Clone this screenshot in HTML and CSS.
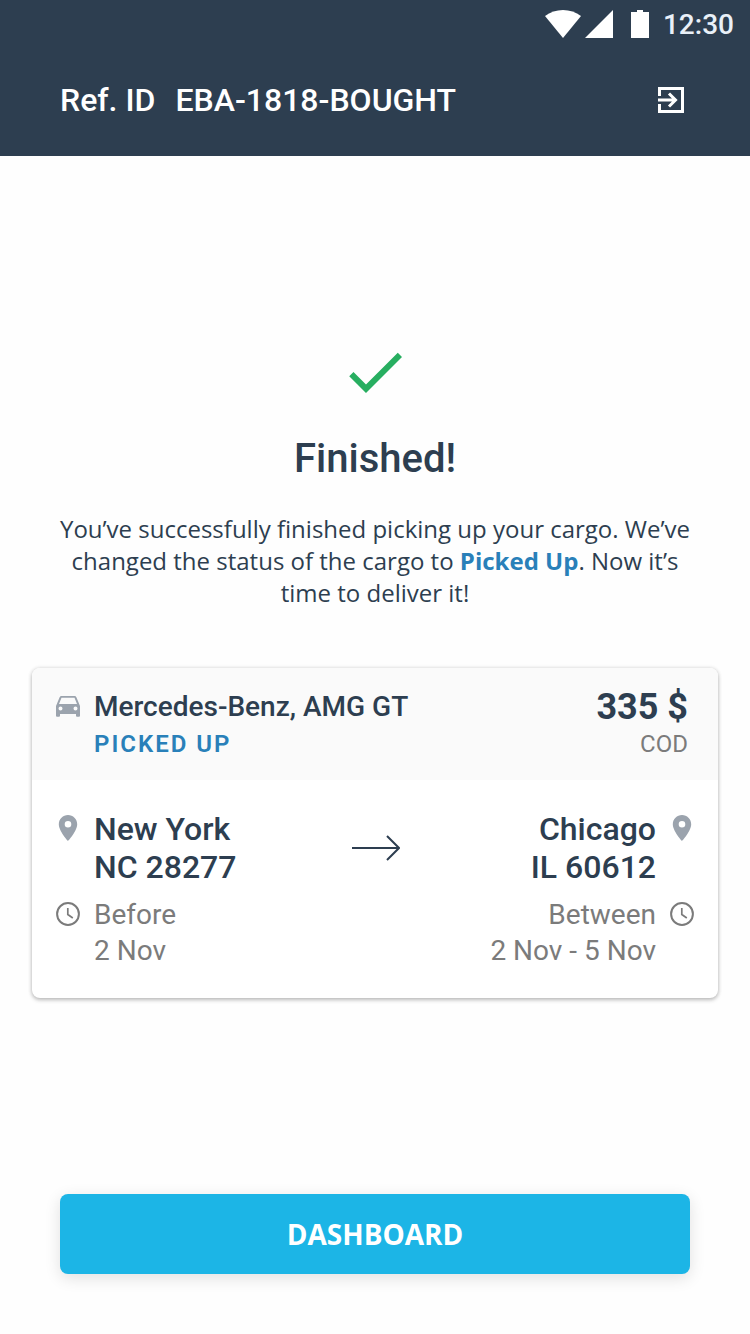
FILE: index.html
```html
<!DOCTYPE html>
<html lang="en">
<head>
    <meta charset="UTF-8">
    <meta name="viewport" content="width=device-width, initial-scale=1.0">
    <title>Cargo picked up</title>
    <link rel="stylesheet" href="styles.css">
</head>
<body>
    <header class="header">
        <div class="status-bar">
            <svg class="wifi-icon" width="36" height="28" viewBox="0 0 36 28" aria-hidden="true">
                <path d="M0 6C10-2 26-2 36 6L18 28z"/>
            </svg>
            <svg class="signal-icon" width="28" height="28" viewBox="0 0 28 28" aria-hidden="true">
                <path d="M28 0v28H0z"/>
            </svg>
            <svg class="battery-icon" width="18" height="28" viewBox="0 0 18 28" aria-hidden="true">
                <path d="M6 0h6v2h6v26H0V2h6z"/>
            </svg>
            <span class="time">12:30</span>
        </div>
        <div class="title-bar">
            <h1 class="ref-id"><span>Ref. ID</span><span>EBA-1818-BOUGHT</span></h1>
            <button class="exit-btn" type="button" aria-label="Exit">
                <svg width="26" height="26" viewBox="0 0 26 26" fill="none" stroke="currentColor" stroke-width="3">
                    <path d="M1.5 9V1.5h23v23h-23V17"/>
                    <path d="M0 13h17M11 6.5l6.500 6.500-6.500 6.500"/>
                </svg>
            </button>
        </div>
    </header>

    <main class="content">
        <svg class="check-icon" width="72" height="72" viewBox="0 0 24 24" aria-hidden="true">
            <path d="M9 16.17L4.83 12l-1.42 1.41L9 19 21 7l-1.41-1.41z"/>
        </svg>
        <h2 class="headline">Finished!</h2>
        <p class="message">You’ve successfully finished picking up your cargo. We’ve changed the status of the cargo to <strong>Picked Up</strong>. Now it’s time to deliver it!</p>

        <section class="card">
            <div class="card-header">
                <div class="icon-row">
                    <svg class="icon" width="24" height="36" viewBox="0 1 24 36" aria-hidden="true">
                        <path fill-rule="evenodd" d="M20.5 9.5C20.2 8.6 19.5 8 18.5 8h-13c-1 0-1.7.6-2 1.5L0 18v9.500c0 .8.5 1.300 1.300 1.300h1.400c.8 0 1.300-.5 1.300-1.300V26h16v1.500c0 .8.5 1.300 1.300 1.300h1.400c.8 0 1.300-.5 1.300-1.300V18zM5.500 9.700h13l2.500 6.300H3zM4.500 22.500a2 2 0 1 1 0-4 2 2 0 0 1 0 4zM19.500 22.500a2 2 0 1 1 0-4 2 2 0 0 1 0 4z"/>
                    </svg>
                    <div>
                        <h3 class="car-name">Mercedes-Benz, AMG GT</h3>
                        <div class="status">PICKED UP</div>
                    </div>
                </div>
                <div class="payment">
                    <div class="price">335 $</div>
                    <div class="method">COD</div>
                </div>
            </div>

            <div class="route">
                <div class="icon-row">
                    <svg class="icon" width="24" height="36" viewBox="0 0 24 36" aria-hidden="true">
                        <path fill-rule="evenodd" d="M12 5c-5 0-9.200 4-9.200 9.200C2.800 21 12 31 12 31s9.200-10 9.200-16.800C21.200 9 17 5 12 5zm0 12.500a3.300 3.300 0 1 1 0-6.600 3.300 3.300 0 0 1 0 6.600z"/>
                    </svg>
                    <div class="place">New York<br>NC 28277</div>
                </div>
                <svg class="arrow" width="50" height="26" viewBox="0 0 50 26" fill="none" stroke="currentColor" stroke-width="2" aria-hidden="true">
                    <path d="M2 13h47M37 1l12 12-12 12"/>
                </svg>
                <div class="icon-row icon-row-end">
                    <svg class="icon" width="24" height="36" viewBox="0 0 24 36" aria-hidden="true">
                        <path fill-rule="evenodd" d="M12 5c-5 0-9.200 4-9.200 9.200C2.800 21 12 31 12 31s9.200-10 9.200-16.800C21.200 9 17 5 12 5zm0 12.500a3.300 3.300 0 1 1 0-6.600 3.300 3.300 0 0 1 0 6.600z"/>
                    </svg>
                    <div class="place">Chicago<br>IL 60612</div>
                </div>

                <div class="icon-row">
                    <svg class="clock-icon" width="24" height="36" viewBox="0 1 24 36" fill="none" stroke="currentColor" stroke-width="2" aria-hidden="true">
                        <circle cx="12" cy="18" r="10.900"/>
                        <path d="M11.800 12v6.500l5 3.500" stroke-width="1.700"/>
                    </svg>
                    <div class="date">Before<br>2 Nov</div>
                </div>
                <div class="icon-row icon-row-end date-end">
                    <svg class="clock-icon" width="24" height="36" viewBox="0 1 24 36" fill="none" stroke="currentColor" stroke-width="2" aria-hidden="true">
                        <circle cx="12" cy="18" r="10.900"/>
                        <path d="M11.800 12v6.500l5 3.500" stroke-width="1.700"/>
                    </svg>
                    <div class="date">Between<br>2 Nov - 5 Nov</div>
                </div>
            </div>
        </section>
    </main>

    <footer class="footer">
        <button class="dashboard-btn" type="button">DASHBOARD</button>
    </footer>
</body>
</html>
```
FILE: styles.css
```css
* {
    box-sizing: border-box;
}
body {
    display: flex;
    flex-direction: column;
    min-height: 100vh;
    margin: 0;
    background-color: #fefefe;
    color: #2d3e50;
    font-family: Roboto, sans-serif;
}
h1, h2, h3, p {
    margin: 0;
    font-weight: 500;
}
svg {
    display: block;
    flex-shrink: 0;
}
button {
    border: none;
    cursor: pointer;
}

/* header */
.header {
    background-color: #2d3e50;
    color: white;
}
.status-bar {
    display: flex;
    align-items: center;
    justify-content: flex-end;
    height: 48px;
    padding: 0 16px;
    fill: white;
}
.signal-icon {
    margin-left: 4px;
}
.battery-icon {
    margin: 0 14px 0 18px;
}
.time {
    color: #e9f0f8;
    font-size: 28px;
    font-weight: 500;
}
.title-bar {
    display: flex;
    align-items: center;
    justify-content: space-between;
    padding: 24px 60px 28px;
}
.ref-id {
    display: flex;
    gap: 20px;
    font-size: 32px;
    line-height: 56px;
}
.exit-btn {
    padding: 6px;
    background: none;
    color: white;
}

/* message */
.content {
    padding: 180px 32px 0;
}
.check-icon {
    margin: 0 auto 26px;
    fill: #27ae60;
}
.headline {
    font-size: 40px;
    line-height: 50px;
    text-align: center;
}
.message {
    margin: 29px 24px 59px;
    font-family: "Open Sans", sans-serif;
    font-size: 24px;
    font-weight: 400;
    line-height: 32px;
    text-align: center;
}
.message strong {
    color: #2980b9;
}

/* cargo card */
.card {
    overflow: hidden;
    border-radius: 8px;
    background-color: white;
    box-shadow: 0 2px 4px rgba(0, 0, 0, 0.24), 0 0 4px rgba(0, 0, 0, 0.12);
}
.card-header {
    display: flex;
    justify-content: space-between;
    padding: 21px 30px 17px 24px;
    background-color: #fafafa;
}
.icon-row {
    display: flex;
    gap: 14px;
}
.icon-row-end {
    flex-direction: row-reverse;
    text-align: right;
}
.icon {
    fill: #9ba3ad;
}
.car-name {
    font-size: 28px;
    line-height: 36px;
}
.status {
    color: #2980b9;
    font-size: 24px;
    font-weight: 600;
    line-height: 38px;
    letter-spacing: 2px;
}
.payment {
    text-align: right;
}
.price {
    font-size: 36px;
    font-weight: 700;
    line-height: 36px;
}
.method {
    color: #7b7b7b;
    font-size: 24px;
    line-height: 38px;
}
.route {
    display: grid;
    grid-template-columns: 1fr auto 1fr;
    align-items: center;
    row-gap: 11px;
    padding: 30px 24px 29px;
}
.place {
    font-size: 32px;
    font-weight: 500;
    line-height: 38px;
}
.date {
    color: #7b7b7b;
    font-size: 28px;
    line-height: 36px;
}
.date-end {
    grid-column: 3;
}
.clock-icon {
    color: #7b7b7b;
}

/* footer */
.footer {
    margin-top: auto;
    padding: 60px;
}
.dashboard-btn {
    width: 100%;
    padding: 20px;
    border-radius: 8px;
    background-color: #1cb5e6;
    color: white;
    font-family: "Open Sans", sans-serif;
    font-size: 28px;
    font-weight: 700;
    line-height: 40px;
    box-shadow: 0 4px 16px rgba(0, 0, 0, 0.12);
}
```
